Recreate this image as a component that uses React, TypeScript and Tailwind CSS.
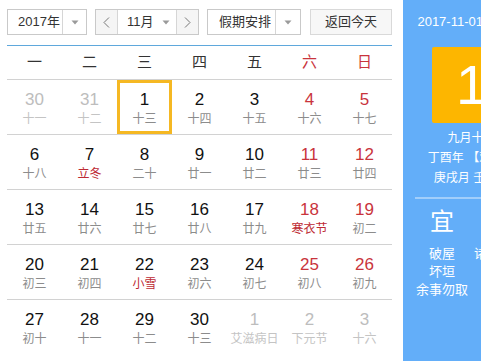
import React from 'react'

type Cell = { d: number; l: string; out?: boolean; fest?: boolean; sel?: boolean }

const weeks: Cell[][] = [
  [
    { d: 30, l: '十一', out: true },
    { d: 31, l: '十二', out: true },
    { d: 1, l: '十三', sel: true },
    { d: 2, l: '十四' },
    { d: 3, l: '十五' },
    { d: 4, l: '十六' },
    { d: 5, l: '十七' },
  ],
  [
    { d: 6, l: '十八' },
    { d: 7, l: '立冬', fest: true },
    { d: 8, l: '二十' },
    { d: 9, l: '廿一' },
    { d: 10, l: '廿二' },
    { d: 11, l: '廿三' },
    { d: 12, l: '廿四' },
  ],
  [
    { d: 13, l: '廿五' },
    { d: 14, l: '廿六' },
    { d: 15, l: '廿七' },
    { d: 16, l: '廿八' },
    { d: 17, l: '廿九' },
    { d: 18, l: '寒衣节', fest: true },
    { d: 19, l: '初二' },
  ],
  [
    { d: 20, l: '初三' },
    { d: 21, l: '初四' },
    { d: 22, l: '小雪', fest: true },
    { d: 23, l: '初六' },
    { d: 24, l: '初七' },
    { d: 25, l: '初八' },
    { d: 26, l: '初九' },
  ],
  [
    { d: 27, l: '初十' },
    { d: 28, l: '十一' },
    { d: 29, l: '十二' },
    { d: 30, l: '十三' },
    { d: 1, l: '艾滋病日', out: true },
    { d: 2, l: '下元节', out: true },
    { d: 3, l: '十六', out: true },
  ],
]

const weekdays = ['一', '二', '三', '四', '五', '六', '日']

function Caret() {
  return (
    <svg width="8" height="5" viewBox="0 0 8 5">
      <path d="M0.5 0.5 L7.5 0.5 L4 4.5 Z" fill="#9a9a9a" />
    </svg>
  )
}

function Chevron({ dir }: { dir: 'l' | 'r' }) {
  return (
    <svg width="7" height="11" viewBox="0 0 7 11">
      <polyline
        points={dir === 'l' ? '6,0.5 1,5.5 6,10.5' : '1,0.5 6,5.5 1,10.5'}
        fill="none"
        stroke="#777"
        strokeWidth="1"
      />
    </svg>
  )
}

function DayCell({ c, col }: { c: Cell; col: number }) {
  const weekend = col >= 5
  const numColor = c.out ? 'text-[#bdbdbd]' : weekend ? 'text-[#c9343c]' : 'text-[#111]'
  const lunarColor = c.out ? 'text-[#c4c4c4]' : c.fest ? 'text-[#bd2a33]' : 'text-[#8c8c8c]'
  return (
    <div
      className={`w-[55px] h-[54px] flex flex-col items-center ${
        c.sel ? 'border-[3px] border-[#f5b823] pt-[7px]' : 'pt-[10px]'
      }`}
    >
      <span className={`text-[17px] leading-[20px] ${numColor}`}>{c.d}</span>
      <span className={`text-[12px] leading-[18px] whitespace-nowrap ${lunarColor}`}>{c.l}</span>
    </div>
  )
}

export default function App() {
  return (
    <div className="w-[481px] h-[361px] overflow-hidden flex bg-white font-['Liberation_Sans','Noto_Sans_CJK_SC',sans-serif]">
      {/* calendar */}
      <div className="w-[403px] shrink-0 pl-[7px] pt-[9px]">
        <div className="w-[385px] flex items-center h-[26px] text-[13px] text-[#333]">
          <div className="w-[80px] h-[26px] border border-[#c9c9c9] flex items-center">
            <span className="flex-1 pl-[10px]">2017年</span>
            <span className="w-[24px] h-full border-l border-[#d6d6d6] flex items-center justify-center">
              <Caret />
            </span>
          </div>
          <div className="ml-[8px] w-[104px] h-[26px] border border-[#c9c9c9] flex items-center">
            <span className="w-[22px] h-full bg-[#f5f5f5] border-r border-[#d6d6d6] flex items-center justify-center">
              <Chevron dir="l" />
            </span>
            <span className="flex-1 flex items-center pl-[9px] gap-[8px]">
              11月
              <Caret />
            </span>
            <span className="w-[22px] h-full bg-[#f5f5f5] border-l border-[#d6d6d6] flex items-center justify-center">
              <Chevron dir="r" />
            </span>
          </div>
          <div className="ml-[8px] w-[94px] h-[26px] border border-[#c9c9c9] flex items-center">
            <span className="flex-1 pl-[11px]">假期安排</span>
            <span className="w-[25px] h-full border-l border-[#d6d6d6] flex items-center justify-center">
              <Caret />
            </span>
          </div>
          <button className="ml-[9px] w-[82px] h-[26px] border border-[#d9d9d9] bg-[#f7f7f7] text-[#333] flex items-center justify-center">
            返回今天
          </button>
        </div>

        <div className="w-[385px] mt-[10px] border-t border-[#5fa8dc]" />

        <div className="w-[385px] h-[34px] flex border-b border-[#d2d2d2]">
          {weekdays.map((w, i) => (
            <div
              key={w}
              className={`w-[55px] flex items-center justify-center text-[15px] ${
                i >= 5 ? 'text-[#c9343c]' : 'text-[#333]'
              }`}
            >
              {w}
            </div>
          ))}
        </div>

        {weeks.map((wk, r) => (
          <div
            key={r}
            className={`w-[385px] flex ${r < weeks.length - 1 ? 'border-b border-[#d2d2d2]' : ''}`}
          >
            {wk.map((c, i) => (
              <DayCell key={i} c={c} col={i} />
            ))}
          </div>
        ))}
      </div>

      {/* side panel */}
      <div className="w-[137px] shrink-0 bg-[#63aef9] text-white flex flex-col items-center">
        <div className="mt-[14px] text-[13px] leading-[16px] whitespace-nowrap">2017-11-01 星期三</div>
        <div className="mt-[17px] w-[80px] h-[76px] rounded-[2px] bg-[#fdb600] flex items-center justify-center text-[56px] leading-none">
          1
        </div>
        <div className="mt-[5px] flex flex-col items-center text-[12px] leading-[20px] whitespace-nowrap">
          <span>九月十三</span>
          <span>丁酉年 【鸡年】</span>
          <span>庚戌月 壬子日</span>
        </div>
        <div className="mt-[9px] w-[117px] ml-[3px] border-t-2 border-white/40" />
        <div className="w-[137px] flex pl-[10px] mt-[8px]">
          <div className="w-[58px] flex flex-col items-center text-[13px] leading-[18px]">
            <span className="text-[24px] leading-[30px]">宜</span>
            <span className="mt-[8px]">破屋</span>
            <span>坏垣</span>
            <span className="whitespace-nowrap">余事勿取</span>
          </div>
          <div className="w-[58px] flex flex-col items-center text-[13px] leading-[18px]">
            <span className="text-[24px] leading-[30px]">忌</span>
            <span className="mt-[8px] whitespace-nowrap">诸事不宜</span>
          </div>
        </div>
      </div>
    </div>
  )
}
